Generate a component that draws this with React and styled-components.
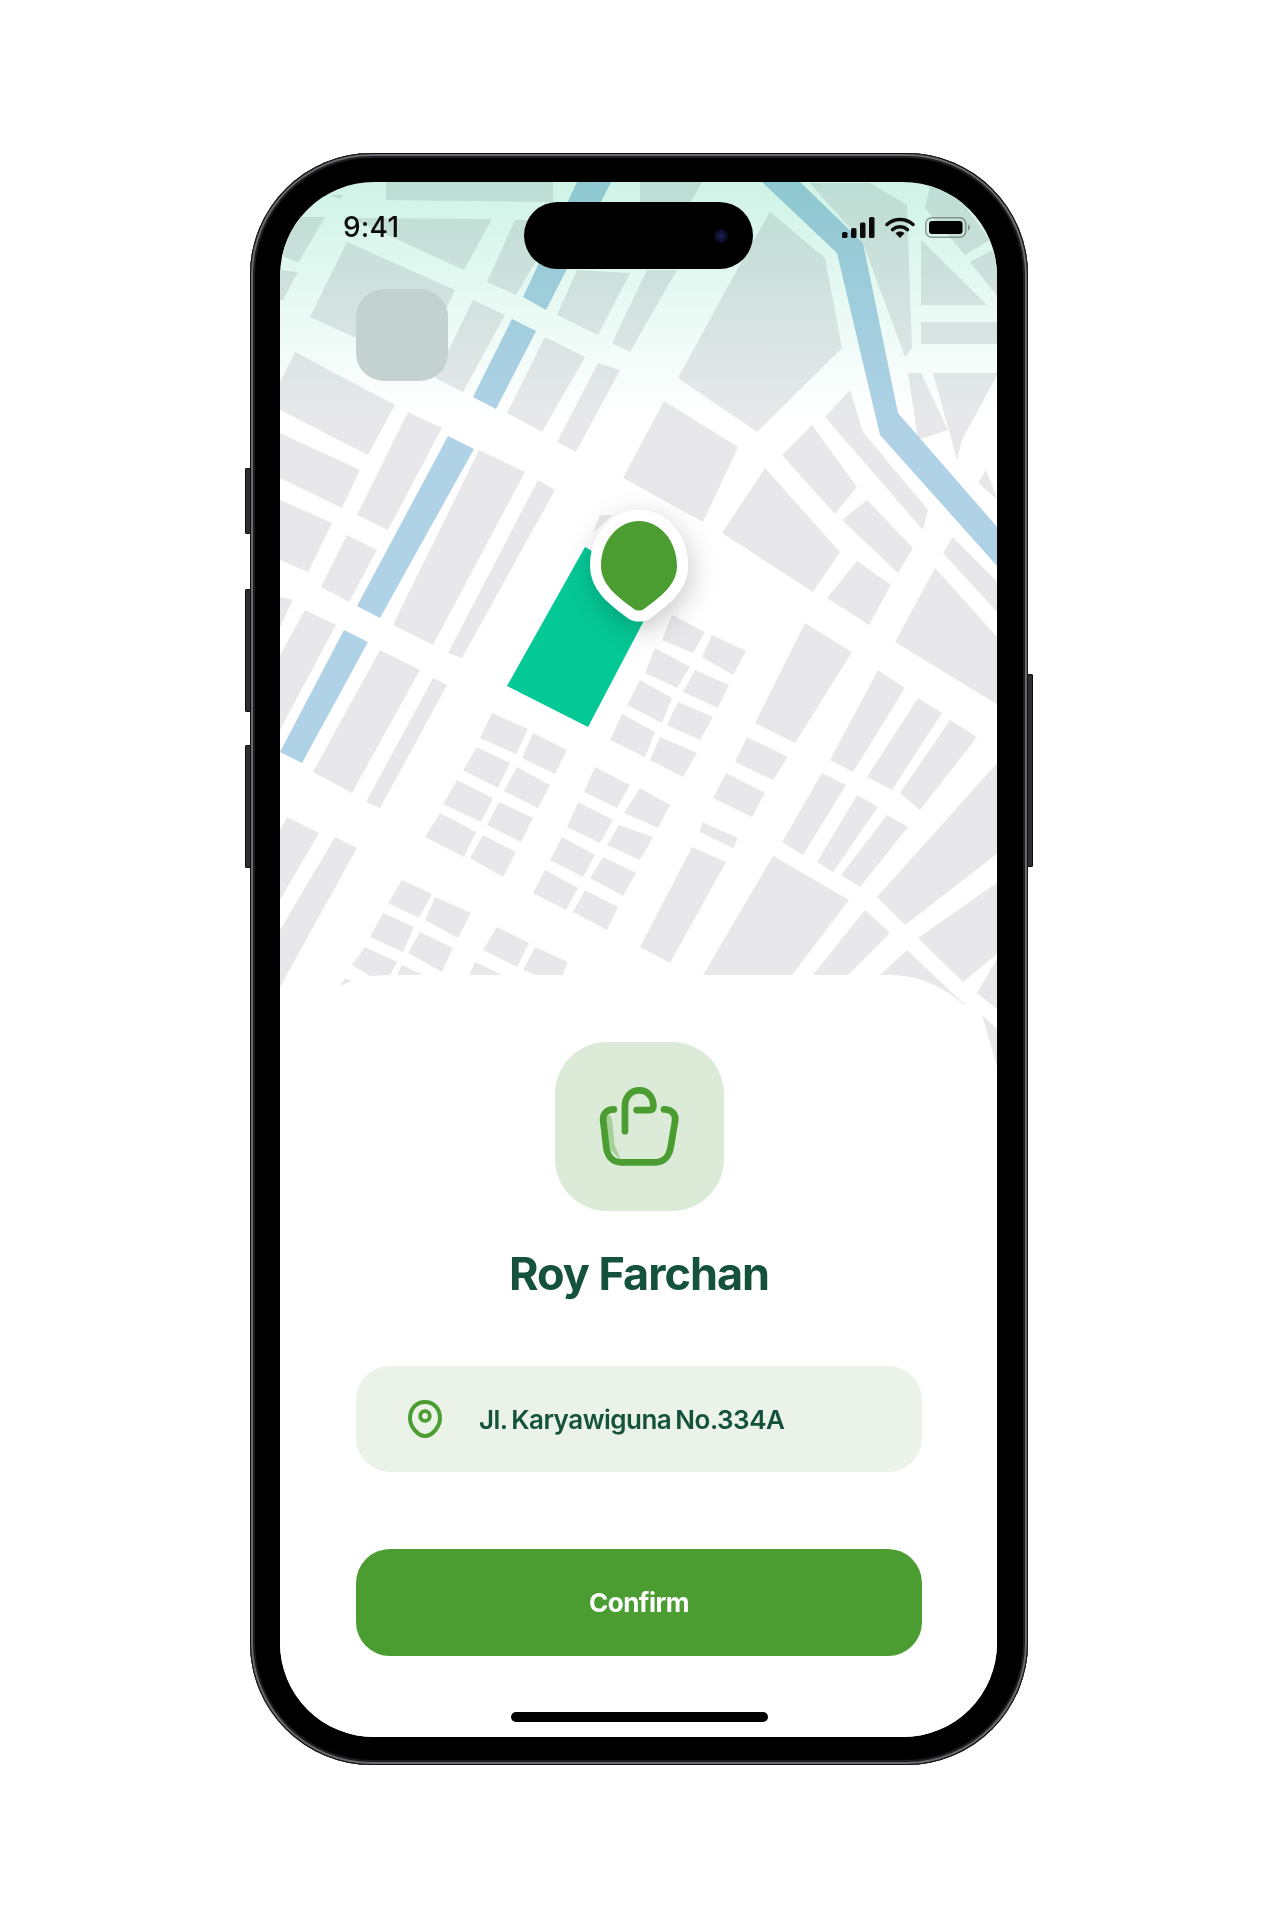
import React from "react";
import styled, { createGlobalStyle } from "styled-components";

const GlobalStyle = createGlobalStyle`
  html, body {
    margin: 0;
    padding: 0;
    background: #fff;
    font-family: "Inter", "Liberation Sans", sans-serif;
  }
`;

// map shapes, in page pixels (the svg viewBox starts at the screen's corner)
const BLOCKS = [
  "386,182 553,182 553,202 386,200",
  "330,195 343,195 340,199",
  "283,217 325,217 298,263 280,255",
  "350,218 492,219 464,270",
  "347,242 455,290 420,367 310,317",
  "473,300 505,315 463,392 435,378",
  "515,220 560,220 516,295 487,282",
  "557,315 598,335 630,273 577,270",
  "612,343 630,352 677,270 647,270",
  "640,182 702,182 690,203 640,203",
  "770,212 825,258 842,348 757,432 678,378 737,270",
  "810,183 870,183 907,205 912,348 905,357 863,243",
  "921,240 987,305 921,305",
  "921,322 998,322 998,344 921,344",
  "930,186 950,186 990,240 965,255 925,208",
  "970,262 998,247 998,297",
  "933,373 998,373 962,440 957,460",
  "908,373 921,373 948,430 918,440",
  "986,470 978,483 998,500",
  "280,270 298,272 283,300 280,300",
  "545,337 585,357 542,432 507,413",
  "295,352 395,405 368,455 280,410 280,382",
  "408,412 442,428 388,530 357,515",
  "280,433 360,470 342,508 280,478",
  "280,500 332,523 308,572 280,560",
  "347,535 377,550 349,602 321,587",
  "280,597 293,600 280,627",
  "305,610 336,625 280,730 280,655",
  "479,450 525,472 433,645 393,625",
  "538,480 555,490 462,658 448,653",
  "598,363 620,370 576,452 557,442",
  "600,515 612,515 593,533",
  "664,401 738,447 703,522 623,478",
  "380,650 420,670 352,793 313,772",
  "433,678 447,685 380,808 366,802",
  "287,817 319,833 280,900 280,830",
  "335,837 357,848 280,987 280,930",
  // grid south of the pin
  "492,713 528,729 516,754 480,738",
  "533,733 567,750 555,774 522,758",
  "477,747 510,763 498,788 463,770",
  "517,767 550,785 538,808 504,791",
  "457,780 493,798 481,822 443,804",
  "499,802 533,818 521,842 487,825",
  "440,813 476,832 464,857 425,837",
  "483,835 516,852 503,877 470,858",
  "595,767 630,785 617,808 584,792",
  "640,788 670,805 658,828 624,813",
  "578,802 613,820 600,843 567,827",
  "619,825 653,837 640,860 607,845",
  "562,837 595,855 583,877 550,860",
  "603,857 636,873 623,896 590,878",
  "545,870 578,888 566,910 533,893",
  "585,890 618,907 607,930 573,912",
  "402,880 432,894 419,918 388,903",
  "435,897 471,913 458,938 425,920",
  "383,913 414,927 403,952 370,937",
  "420,932 453,948 442,972 408,953",
  "365,947 397,962 385,985 352,965",
  "402,965 440,983 425,1005 393,983",
  "345,978 355,983 340,987",
  "497,927 529,943 517,967 483,950",
  "535,947 568,962 558,985 523,970",
  "475,962 513,980 503,997 467,980",
  "672,615 705,632 693,653 662,640",
  "712,635 746,651 733,675 702,657",
  "655,648 690,667 677,688 645,673",
  "695,670 729,685 718,708 683,692",
  "640,680 672,698 662,723 627,705",
  "678,702 713,717 700,740 667,725",
  "622,714 655,732 645,757 610,740",
  "660,737 697,753 683,777 650,760",
  // east side
  "805,623 852,652 795,743 755,723",
  "747,737 788,757 773,780 735,762",
  "722,533 765,468 840,552 813,592",
  "812,425 857,487 835,514 782,455",
  "850,390 863,432 928,510 923,530 825,417",
  "842,520 867,500 913,548 898,573",
  "827,598 857,561 891,585 869,625",
  "895,642 935,568 998,638 998,705",
  "943,553 953,537 998,583 998,613",
  "878,670 905,688 853,772 830,760",
  "918,698 942,713 892,790 867,777",
  "950,720 977,737 920,810 900,793",
  "726,773 765,793 752,817 713,798",
  "702,822 738,838 733,848 700,832",
  "692,847 726,862 670,963 640,947",
  "822,773 846,785 803,855 782,842",
  "857,795 878,807 833,872 817,862",
  "887,815 908,827 860,887 841,875",
  "773,856 849,900 792,975 703,975",
  "998,762 998,853 905,925 877,897",
  "998,882 998,953 963,982 918,938",
  "865,910 890,933 848,975 813,975",
  "907,950 965,1005 880,1005 880,975",
  "998,957 977,993 998,1010",
  "982,1015 998,1030 998,1070",
];

const RIVERS = [
  "577,182 611,182 546,310 523,297",
  "512,319 536,331 496,409 473,397",
  "448,436 474,449 380,618 357,606",
  "344,630 368,642 302,763 280,752",
  "762,182 800,182 863,243 898,413 998,528 998,567 880,435 837,253",
];

const Page = styled.div`
  min-height: 1920px;
  padding: 153px 0 0 250px;
  box-sizing: border-box;
  background: #fff;
`;

const Phone = styled.div`
  position: relative;
  width: 778px;
  height: 1612px;
  padding: 29px 31px 28px 30px;
  box-sizing: border-box;
  border-radius: 122px;
  background: #000;
  box-shadow: inset 0 0 0 1px #111, inset 0 0 0 3px #6a6a6e, inset 0 0 0 5px #1e1e20;
`;

const SideButton = styled.div`
  position: absolute;
  top: ${(p) => p.$top}px;
  height: ${(p) => p.$height}px;
  width: 6px;
  ${(p) => (p.$right ? "right: -5px;" : "left: -5px;")}
  border-radius: 2px;
  background: #2e2e30;
  box-shadow: inset 0 0 0 1px #0c0c0c;
`;

const Screen = styled.div`
  position: relative;
  display: flex;
  flex-direction: column;
  width: 717px;
  height: 1555px;
  border-radius: 94px;
  overflow: hidden;
  background: #fff;
`;

const MapArt = styled.svg`
  position: absolute;
  top: 0;
  left: 0;
  display: block;
`;

const MapFade = styled.div`
  position: absolute;
  top: 0;
  left: 0;
  width: 100%;
  height: 235px;
  background: linear-gradient(180deg, #cff3e6, #fff);
  mix-blend-mode: multiply;
`;

const StatusBar = styled.div`
  position: relative;
  display: flex;
  align-items: center;
  justify-content: space-between;
  height: 26px;
  margin-top: 32px;
  padding: 0 27px 0 63px;
`;

const Time = styled.span`
  font-size: 28px;
  font-weight: 500;
  line-height: 26px;
  letter-spacing: 0.2px;
  color: #0b0b0b;
`;

const StatusIcons = styled.div`
  display: flex;
  align-items: center;
  gap: 10px;
`;

const Island = styled.div`
  position: absolute;
  top: 20px;
  left: 244px;
  width: 229px;
  height: 67px;
  border-radius: 34px;
  background: #000;
`;

const Camera = styled.div`
  position: absolute;
  top: 27px;
  right: 25px;
  width: 14px;
  height: 14px;
  border-radius: 50%;
  background: radial-gradient(circle, #1c2150 0%, #0b0d24 60%, #030308 100%);
`;

const BackButton = styled.div`
  position: relative;
  width: 92px;
  height: 92px;
  margin: 49px 0 0 76px;
  border-radius: 28px;
  background: #c4d2cf;
`;

const Sheet = styled.div`
  position: relative;
  display: flex;
  flex-direction: column;
  align-items: center;
  margin-top: auto;
  height: 762px;
  padding: 67px 75px 0 76px;
  box-sizing: border-box;
  border-radius: 108px 108px 0 0;
  background: #fff;
`;

const Tile = styled.div`
  display: flex;
  align-items: center;
  justify-content: center;
  width: 169px;
  height: 169px;
  border-radius: 52px;
  background: #dcebd8;
`;

const Name = styled.h1`
  margin: 36px 0 0;
  font-size: 45px;
  font-weight: 700;
  line-height: 54px;
  letter-spacing: -1px;
  color: #14523b;
`;

const AddressBar = styled.div`
  display: flex;
  align-items: center;
  gap: 37px;
  width: 100%;
  height: 106px;
  margin-top: 65px;
  padding-left: 52px;
  box-sizing: border-box;
  border-radius: 34px;
  background: #ebf3e9;
`;

const AddressText = styled.span`
  font-size: 26px;
  font-weight: 600;
  letter-spacing: -0.5px;
  word-spacing: -2px;
  color: #14523b;
`;

const ConfirmButton = styled.button`
  width: 100%;
  height: 107px;
  margin-top: 77px;
  border: 0;
  border-radius: 34px;
  background: #4b9d31;
  font-family: inherit;
  font-size: 26px;
  font-weight: 700;
  letter-spacing: -0.5px;
  color: #fff;
`;

const HomeBar = styled.div`
  width: 257px;
  height: 10px;
  margin-top: 56px;
  border-radius: 5px;
  background: #000;
`;

const SignalIcon = () => (
  <svg width="33" height="21" viewBox="0 0 33 21">
    <rect x="0" y="15" width="5.5" height="6" rx="1.6" fill="#0b0b0b" />
    <rect x="9" y="11" width="5.5" height="10" rx="1.6" fill="#0b0b0b" />
    <rect x="18" y="5.5" width="5.5" height="15.5" rx="1.6" fill="#0b0b0b" />
    <rect x="27" y="0" width="5.5" height="21" rx="1.6" fill="#0b0b0b" />
  </svg>
);

const WifiIcon = () => (
  <svg width="30" height="21" viewBox="0 0 30 21">
    <path d="M2 7.5C9.5 .8 20.5 .8 28 7.5" fill="none" stroke="#0b0b0b" strokeWidth="3.4" strokeLinecap="round" />
    <path d="M7.5 12.6C12 8.8 18 8.8 22.5 12.6" fill="none" stroke="#0b0b0b" strokeWidth="3.4" strokeLinecap="round" />
    <path d="M15 21L10.4 16.2C13 14 17 14 19.6 16.2Z" fill="#0b0b0b" />
  </svg>
);

const BatteryIcon = () => (
  <svg width="45" height="21" viewBox="0 0 45 21">
    <rect x="0.8" y="0.8" width="40" height="19.4" rx="6" fill="none" stroke="#5f6b69" strokeOpacity="0.65" strokeWidth="1.5" />
    <rect x="4" y="4" width="33.5" height="13" rx="3" fill="#000" />
    <path d="M43 7.5C44.5 8.2 45 9.3 45 10.5C45 11.7 44.5 12.8 43 13.5Z" fill="#5f6b69" fillOpacity="0.6" />
  </svg>
);

const BagIcon = () => (
  <svg width="84" height="82" viewBox="170 165 250 245">
    <path d="M205 250L194 265L205 350L240 386L222 340L214 262Z" fill="#a6d09a" />
    <path d="M220 235C198 235 186 248 188 268L197 346C200 374 216 393 242 393H344C370 393 386 374 390 346L403 268C405 248 392 235 370 235" fill="none" stroke="#4b9d31" strokeWidth="20" strokeLinecap="round" />
    <path d="M253 300V225C253 197 272 178 296 178C320 178 338 197 338 225C338 233 334 237 326 237H288" fill="none" stroke="#4b9d31" strokeWidth="20" strokeLinecap="round" />
  </svg>
);

const LocationIcon = () => (
  <svg width="34" height="38" viewBox="0 0 34 38">
    <path d="M17 2C26 2 32 9 32 18C32 27 24 36 17 36C10 36 2 27 2 18C2 9 8 2 17 2Z" fill="none" stroke="#4b9d31" strokeWidth="4" />
    <circle cx="17" cy="16" r="4.8" fill="none" stroke="#4b9d31" strokeWidth="3.8" />
  </svg>
);

const App = () => {
  return (
    <Page>
      <GlobalStyle />
      <Phone>
        <SideButton $top={315} $height={66} />
        <SideButton $top={436} $height={123} />
        <SideButton $top={592} $height={123} />
        <SideButton $right $top={521} $height={193} />
        <Screen>
          <MapArt width="718" height="890" viewBox="280 182 718 890">
            <defs>
              <filter id="pin-shadow" x="-60%" y="-60%" width="220%" height="220%">
                <feDropShadow dx="2" dy="8" stdDeviation="14" floodColor="#000" floodOpacity="0.22" />
              </filter>
            </defs>
            <g style={{ filter: "blur(0.5px)" }}>
              {BLOCKS.map((pts) => (
                <polygon key={pts} points={pts} fill="#e8e8ea" />
              ))}
              {RIVERS.map((pts) => (
                <polygon key={pts} points={pts} fill="#afd2e7" />
              ))}
              <polygon points="585,547 660,590 588,727 507,686" fill="#04c896" />
            </g>
            <path
              d="M639 521C660 521 677 541 677 566C677 585 660 597 644 609C641 611 637 611 634 609C618 597 601 585 601 566C601 541 618 521 639 521Z"
              fill="#4b9d31"
              stroke="#fff"
              strokeWidth="22"
              paintOrder="stroke"
              strokeLinejoin="round"
              filter="url(#pin-shadow)"
            />
          </MapArt>
          <MapFade />
          <StatusBar>
            <Time>9:41</Time>
            <StatusIcons>
              <SignalIcon />
              <WifiIcon />
              <BatteryIcon />
            </StatusIcons>
          </StatusBar>
          <Island>
            <Camera />
          </Island>
          <BackButton />
          <Sheet>
            <Tile>
              <BagIcon />
            </Tile>
            <Name>Roy Farchan</Name>
            <AddressBar>
              <LocationIcon />
              <AddressText>Jl. Karyawiguna No.334A</AddressText>
            </AddressBar>
            <ConfirmButton>Confirm</ConfirmButton>
            <HomeBar />
          </Sheet>
        </Screen>
      </Phone>
    </Page>
  );
};

export default App;
